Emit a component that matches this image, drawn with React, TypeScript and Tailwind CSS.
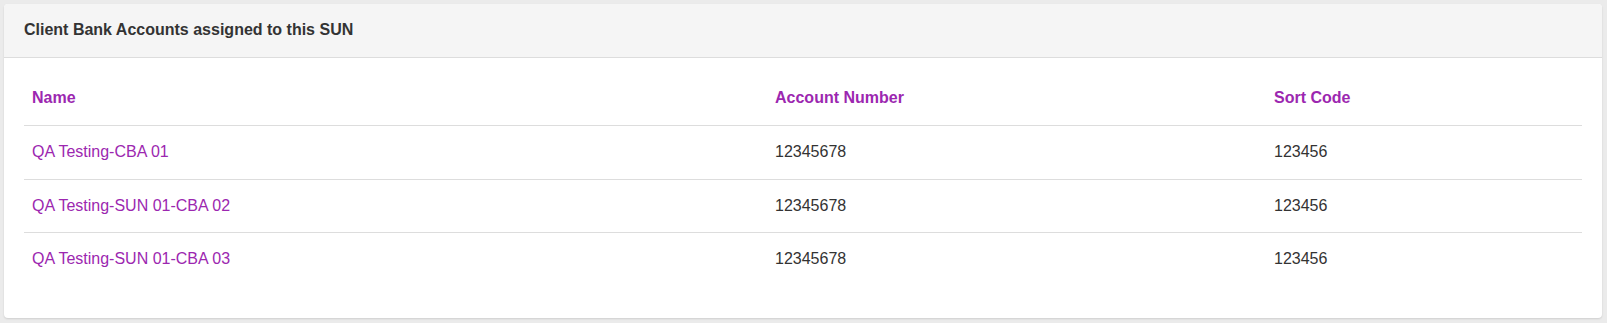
import React from "react";

const rows = [
  { name: "QA Testing-CBA 01", acc: "12345678", sort: "123456" },
  { name: "QA Testing-SUN 01-CBA 02", acc: "12345678", sort: "123456" },
  { name: "QA Testing-SUN 01-CBA 03", acc: "12345678", sort: "123456" },
];

export default function App() {
  return (
    <div
      className="h-[323px] bg-[#ebebeb] pt-[4px] pl-[4px] pr-[5px] pb-[5px] text-[16px] leading-[22.85px] text-[#333333]"
      style={{ fontFamily: '"Liberation Sans", Arial, sans-serif' }}
    >
      <div className="h-full rounded-[4px] bg-white shadow-[0_1px_2px_rgba(0,0,0,0.12)] overflow-hidden">
        <div className="bg-[#f5f5f5] border-b border-[#dddddd] px-[20px] py-[15px] font-bold text-[#333333]">
          Client Bank Accounts assigned to this SUN
        </div>
        <div className="px-[20px] pt-[14px]">
          <table className="w-full table-fixed border-collapse">
            <colgroup>
              <col className="w-[743px]" />
              <col className="w-[499px]" />
              <col />
            </colgroup>
            <thead>
              <tr className="border-b border-[#dddddd]">
                <th className="text-left font-bold text-[#9c27b0] px-[8px] py-[15px]">Name</th>
                <th className="text-left font-bold text-[#9c27b0] px-[8px] py-[15px]">Account Number</th>
                <th className="text-left font-bold text-[#9c27b0] px-[8px] py-[15px]">Sort Code</th>
              </tr>
            </thead>
            <tbody>
              {rows.map((r, i) => (
                <tr key={i} className={i > 0 ? "border-t border-[#dddddd]" : ""}>
                  <td className="px-[8px] py-[15px]">
                    <a className="text-[#9c27b0] cursor-pointer">{r.name}</a>
                  </td>
                  <td className="px-[8px] py-[15px]">{r.acc}</td>
                  <td className="px-[8px] py-[15px]">{r.sort}</td>
                </tr>
              ))}
            </tbody>
          </table>
        </div>
      </div>
    </div>
  );
}
